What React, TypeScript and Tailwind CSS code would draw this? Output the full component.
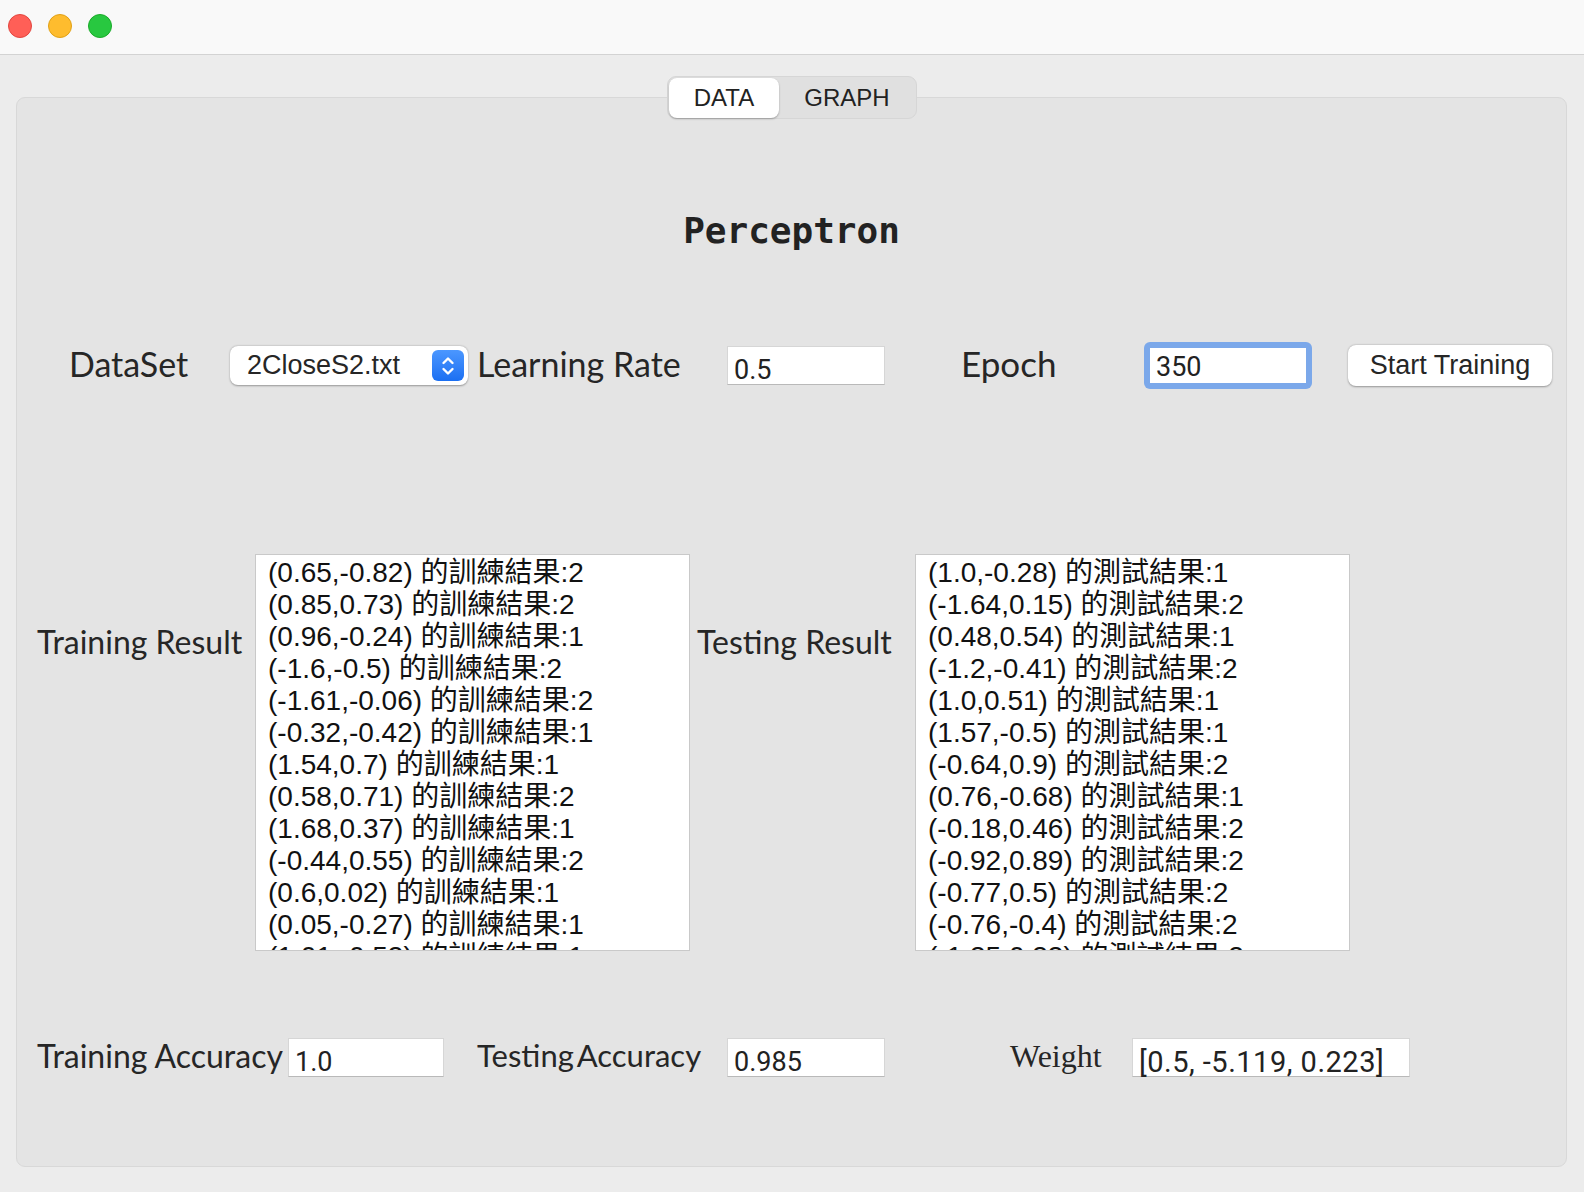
import React from 'react';

const trainingLines = [
  '(0.65,-0.82) 的訓練結果:2',
  '(0.85,0.73) 的訓練結果:2',
  '(0.96,-0.24) 的訓練結果:1',
  '(-1.6,-0.5) 的訓練結果:2',
  '(-1.61,-0.06) 的訓練結果:2',
  '(-0.32,-0.42) 的訓練結果:1',
  '(1.54,0.7) 的訓練結果:1',
  '(0.58,0.71) 的訓練結果:2',
  '(1.68,0.37) 的訓練結果:1',
  '(-0.44,0.55) 的訓練結果:2',
  '(0.6,0.02) 的訓練結果:1',
  '(0.05,-0.27) 的訓練結果:1',
  '(1.01,-0.53) 的訓練結果:1',
  '(-0.88,0.21) 的訓練結果:2',
];

const testingLines = [
  '(1.0,-0.28) 的測試結果:1',
  '(-1.64,0.15) 的測試結果:2',
  '(0.48,0.54) 的測試結果:1',
  '(-1.2,-0.41) 的測試結果:2',
  '(1.0,0.51) 的測試結果:1',
  '(1.57,-0.5) 的測試結果:1',
  '(-0.64,0.9) 的測試結果:2',
  '(0.76,-0.68) 的測試結果:1',
  '(-0.18,0.46) 的測試結果:2',
  '(-0.92,0.89) 的測試結果:2',
  '(-0.77,0.5) 的測試結果:2',
  '(-0.76,-0.4) 的測試結果:2',
  '(-1.35,0.33) 的測試結果:2',
  '(0.12,-0.71) 的測試結果:1',
];

const labelFont = "font-['Lato','Noto_Sans',sans-serif]";
const fieldFont = "font-['Roboto','Liberation_Sans',sans-serif]";

function Field({ value, className = '' }: { value: string; className?: string }) {
  return (
    <div
      className={`h-[39px] bg-white border border-[#d6d6d6] border-b-[#b9b9b9] pl-[6px] pt-[8px] leading-[30px] text-[#222] whitespace-nowrap ${fieldFont} ${className}`}
    >
      {value}
    </div>
  );
}

function ResultList({ lines }: { lines: string[] }) {
  return (
    <div className="w-[435px] h-[397px] overflow-hidden bg-white border border-[#c9c9c9] pl-[12px] pt-[2px]">
      {lines.map((line) => (
        <div
          key={line}
          className="text-[28px] leading-[32px] text-[#111] whitespace-nowrap font-['Liberation_Sans','Noto_Sans_CJK_TC',sans-serif]"
        >
          {line}
        </div>
      ))}
    </div>
  );
}

export default function App(): JSX.Element {
  return (
    <div className="w-[1584px] h-[1192px] bg-[#ececec] overflow-hidden">
      {/* title bar */}
      <div className="h-[55px] bg-[#f9f9f9] border-b border-[#d3d3d3] flex items-center gap-[16px] pl-[8px] pb-[2px]">
        <div className="w-[24px] h-[24px] rounded-full bg-[#ff5f57] border border-[#e2463f]" />
        <div className="w-[24px] h-[24px] rounded-full bg-[#febc2e] border border-[#e1a116]" />
        <div className="w-[24px] h-[24px] rounded-full bg-[#28c840] border border-[#1aab29]" />
      </div>

      <div className="pt-[21px]">
        {/* segmented tabs */}
        <div className="relative z-10 mx-auto w-[250px] h-[43px] rounded-[9px] bg-[#e0e0e0] border border-[#d6d6d6] flex items-center p-[1px] font-['Liberation_Sans',sans-serif] text-[24px] text-[#222]">
          <div className="w-[110px] h-[40px] rounded-[8px] bg-white shadow-[0_1px_2px_rgba(0,0,0,0.3)] flex items-center justify-center">
            DATA
          </div>
          <div className="flex-1 h-[40px] flex items-center justify-center">GRAPH</div>
        </div>

        {/* main panel */}
        <div className="-mt-[22px] ml-[16px] w-[1551px] h-[1070px] rounded-[9px] bg-[#e4e4e4] border border-[#d8d8d8] flex flex-col">
          <div className="mt-[111px] h-[44px] flex items-center justify-center text-[36px] font-bold text-[#222] font-['DejaVu_Sans_Mono',monospace]">
            Perceptron
          </div>

          {/* parameters */}
          <div className={`mt-[89px] h-[47px] flex items-center text-[#262626] ${labelFont}`}>
            <div className="ml-[52px] w-[161px] text-[34px] -mt-[4px]">DataSet</div>
            <div className="w-[238px] h-[39px] rounded-[8px] bg-white shadow-[0_0.5px_2px_rgba(0,0,0,0.35)] flex items-center justify-between pl-[17px] pr-[4px]">
              <span className="text-[27px] text-[#262626] font-['Liberation_Sans',sans-serif]">2CloseS2.txt</span>
              <div className="w-[32px] h-[31px] rounded-[6px] bg-gradient-to-b from-[#4b97ff] to-[#1a6ff2] flex items-center justify-center">
                <svg width="16" height="22" viewBox="0 0 16 22" fill="none" stroke="white" strokeWidth="2.4" strokeLinecap="round" strokeLinejoin="round">
                  <path d="M3.5 8 L8 3.5 L12.5 8" />
                  <path d="M3.5 14 L8 18.5 L12.5 14" />
                </svg>
              </div>
            </div>
            <div className="ml-[9px] w-[250px] text-[34px] -mt-[4px]">Learning Rate</div>
            <Field value="0.5" className="w-[158px] text-[27px]" />
            <div className="ml-[76px] w-[183px] text-[35px] -mt-[4px]">Epoch</div>
            <div className="w-[168px] h-[47px] rounded-[6px] bg-[#7ba8ea] p-[6px]">
              <div className={`h-full bg-white pl-[6px] pt-[4px] text-[27px] leading-[30px] text-[#222] ${fieldFont}`}>
                350
              </div>
            </div>
            <button className="ml-[36px] w-[204px] h-[41px] rounded-[8px] bg-white shadow-[0_0.5px_2px_rgba(0,0,0,0.35)] text-[27px] text-[#262626] font-['Liberation_Sans',sans-serif]">
              Start Training
            </button>
          </div>

          {/* results */}
          <div className={`mt-[165px] flex items-start text-[32px] text-[#262626] ${labelFont}`}>
            <div className="ml-[20px] w-[218px] mt-[70px] leading-[36px] whitespace-nowrap">Training Result</div>
            <ResultList lines={trainingLines} />
            <div className="ml-[7px] w-[218px] mt-[70px] leading-[36px] whitespace-nowrap">Testing Result</div>
            <ResultList lines={testingLines} />
          </div>

          {/* accuracy */}
          <div className={`mt-[87px] h-[39px] flex items-center text-[32px] text-[#262626] ${labelFont}`}>
            <div className="ml-[20px] w-[251px] -mt-[4px] whitespace-nowrap">Training Accuracy</div>
            <Field value="1.0" className="w-[156px] text-[27px]" />
            <div className="ml-[33px] w-[250px] -mt-[4px] text-[31px] whitespace-nowrap [word-spacing:-4px]">Testing Accuracy</div>
            <Field value="0.985" className="w-[158px] text-[27px]" />
            <div className="ml-[125px] w-[122px] -mt-[4px] text-[32px] font-['Liberation_Serif',serif]">Weight</div>
            <Field value="[0.5, -5.119, 0.223]" className="w-[278px] text-[29px] tracking-[0.5px]" />
          </div>
        </div>
      </div>
    </div>
  );
}
